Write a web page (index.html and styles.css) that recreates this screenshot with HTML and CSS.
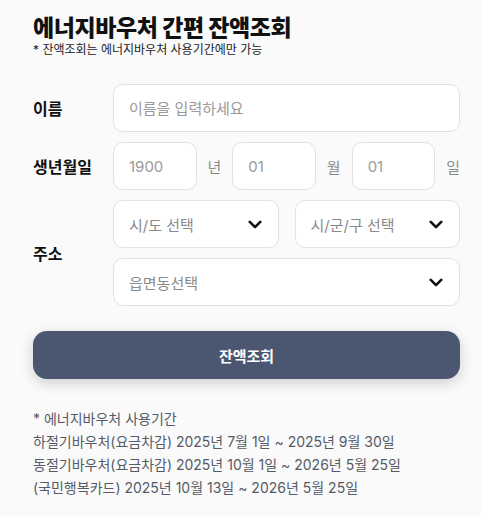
FILE: index.html
```html
<!DOCTYPE html>
<html lang="ko">
<head>
<meta charset="UTF-8" />
<meta name="viewport" content="width=device-width, initial-scale=1" />
<title>에너지바우처 간편 잔액조회</title>
<link rel="stylesheet" href="styles.css">
</head>
<body>

<div class="container">
  <h1>에너지바우처 간편 잔액조회</h1>
  <p class="sub">* 잔액조회는 에너지바우처 사용기간에만 가능</p>

  <form class="form" onsubmit="return false;">
    <label class="label" for="name">이름</label>
    <input class="field" id="name" type="text" placeholder="이름을 입력하세요" />

    <span class="label">생년월일</span>
    <div class="birth">
      <input class="field" type="text" placeholder="1900" />
      <span class="unit">년</span>
      <input class="field" type="text" placeholder="01" />
      <span class="unit">월</span>
      <input class="field" type="text" placeholder="01" />
      <span class="unit">일</span>
    </div>

    <span class="label">주소</span>
    <div class="address">
      <div class="select-row">
        <div class="select">시/도 선택 <svg viewBox="0 0 16 10"><path d="M2 2l6 6 6-6" /></svg></div>
        <div class="select">시/군/구 선택 <svg viewBox="0 0 16 10"><path d="M2 2l6 6 6-6" /></svg></div>
      </div>
      <div class="select">읍면동선택 <svg viewBox="0 0 16 10"><path d="M2 2l6 6 6-6" /></svg></div>
    </div>
  </form>

  <button class="submit">잔액조회</button>

  <div class="notice">
    <p>* 에너지바우처 사용기간</p>
    <p>하절기바우처(요금차감) 2025년 7월 1일 ~ 2025년 9월 30일</p>
    <p>동절기바우처(요금차감) 2025년 10월 1일 ~ 2026년 5월 25일</p>
    <p>(국민행복카드) 2025년 10월 13일 ~ 2026년 5월 25일</p>
  </div>
</div>

</body>
</html>
```

FILE: styles.css
```css
body {
  margin: 0;
  background: #fafafa;
  font-family: Inter, 'Noto Sans CJK KR', sans-serif;
  color: #111;
}
.container {
  padding: 13px 21px 20px 33px;
}
h1 {
  margin: 0;
  font-size: 23px;
  font-weight: 800;
  line-height: 30px;
  letter-spacing: -0.4px;
}
.sub {
  margin: 0 0 27px;
  font-size: 12px;
  line-height: 14px;
  color: #222;
}
.form {
  display: grid;
  grid-template-columns: 80px minmax(0, 1fr);
  row-gap: 10px;
  align-items: center;
}
.label {
  font-size: 16px;
  font-weight: 700;
  color: #111;
}
.field {
  width: 100%;
  height: 48px;
  box-sizing: border-box;
  border: 1px solid #e2e2e2;
  border-radius: 10px;
  background: #fff;
  padding: 0 15px;
  font-family: inherit;
  font-size: 15px;
  color: #333;
  min-width: 0;
  outline: none;
}
.field::placeholder {
  color: #9a9a9a;
}
.birth {
  display: flex;
  align-items: center;
  gap: 11px;
}
.birth .field {
  flex: 1;
}
.unit {
  font-size: 15px;
  color: #8a8a8a;
}
.address {
  display: flex;
  flex-direction: column;
  gap: 10px;
}
.select-row {
  display: flex;
  gap: 16px;
}
.select-row .select {
  flex: 1;
}
.select {
  height: 48px;
  box-sizing: border-box;
  border: 1px solid #e2e2e2;
  border-radius: 10px;
  background: #fff;
  padding: 0 16px 0 15px;
  display: flex;
  align-items: center;
  justify-content: space-between;
  font-size: 15px;
  color: #8a8a8a;
}
.select svg {
  width: 14px;
  height: 9px;
  fill: none;
  stroke: #111;
  stroke-width: 3;
  stroke-linecap: round;
  stroke-linejoin: round;
}
.submit {
  display: block;
  width: 100%;
  height: 48px;
  margin-top: 25px;
  border: none;
  border-radius: 14px;
  background: #4b5670;
  color: #fff;
  font-family: inherit;
  font-size: 15px;
  font-weight: 700;
  box-shadow: 0 4px 14px rgba(0, 0, 0, 0.18);
  cursor: pointer;
}
.notice {
  margin-top: 28px;
  font-size: 14px;
  line-height: 23px;
  color: #555a66;
}
.notice p {
  margin: 0;
}
```
